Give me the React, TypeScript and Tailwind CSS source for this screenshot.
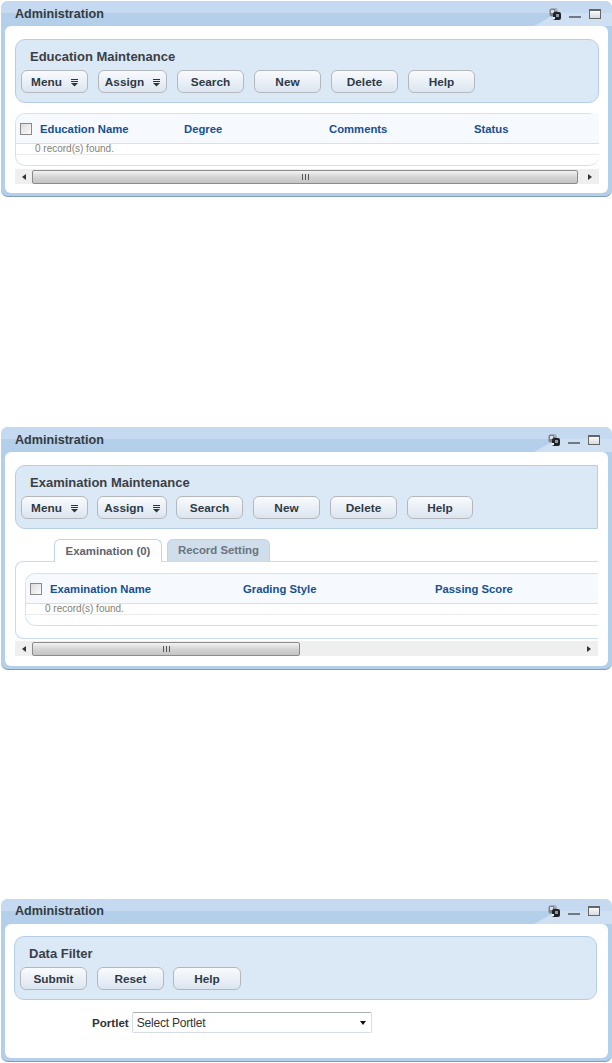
import React from "react";

const PortletIcons = () => {
  return (
    <div className="relative z-10 flex items-center gap-[8px]">
      <svg width="12" height="12" viewBox="0 0 12 12">
        <rect x="0.5" y="0.5" width="8" height="8" rx="2" fill="#7c8288" />
        <rect x="2" y="2" width="3" height="3" fill="#d9e0e6" />
        <rect x="6" y="0" width="2" height="3" fill="#a9b2ba" />
        <rect x="4" y="4" width="8" height="8" rx="2" fill="#202428" />
        <rect x="7" y="6" width="3" height="3" fill="#8d99a6" />
        <rect x="4" y="9" width="2" height="2" fill="#eef3f8" />
      </svg>
      <div className="mt-[7px] h-[2px] w-[12px] bg-[#6f7a86]" />
      <div className="h-[10px] w-[12px] border border-[#666] border-t-2 bg-gradient-to-b from-[#fafafa] to-[#d5dce2]" />
    </div>
  );
};

const Btn = ({ label, w, arrow }: { label: string; w: string; arrow?: boolean }) => {
  return (
    <button
      className={`flex h-[23px] items-center justify-center gap-[9px] rounded-[6px] border border-[#b4b8bc] bg-gradient-to-b from-[#f9fbfd] to-[#dbe5f0] pt-[2px] text-[11.8px] font-bold text-[#2e3a46] ${w}`}
    >
      {label}
      {arrow && (
        <svg width="7" height="8" viewBox="0 0 7 8">
          <path d="M0 0.5H7M0 2.5H7" stroke="#333" strokeWidth="1" />
          <path d="M0 4H7L3.5 7.5Z" fill="#333" />
        </svg>
      )}
    </button>
  );
};

const Header = ({ title, children, wide }: { title: string; children: React.ReactNode; wide?: boolean }) => {
  return (
    <div
      className={`h-[64px] border border-[#b5cee6] bg-[#dbe8f6] pl-[5px] pt-[9px] ${
        wide ? "rounded-l-[10px]" : "rounded-[10px]"
      }`}
    >
      <div className="ml-[9px] text-[13px] leading-[15px] font-bold text-[#3a3f46]">{title}</div>
      <div className="mt-[6px] flex gap-[10px]">{children}</div>
    </div>
  );
};

const Checkbox = () => {
  return <div className="h-[12px] w-[12px] border border-[#8a8a8a] bg-gradient-to-br from-[#dcdcdc] to-[#fbfbfb]" />;
};

const Scrollbar = ({ thumb }: { thumb: string }) => {
  return (
    <div className="flex h-[15px] items-center bg-[#efefef]">
      <div className="flex w-[17px] shrink-0 justify-center">
        <div className="h-0 w-0 border-y-[3px] border-r-[4px] border-y-transparent border-r-[#333]" />
      </div>
      <div className="flex-1">
        <div
          className={`flex h-[14px] items-center justify-center rounded-[2px] border border-[#8b8b8b] bg-gradient-to-b from-[#f3f3f3] via-[#d4d4d4] to-[#c4c4c4] ${thumb}`}
        >
          <div className="h-[6px] w-[7px] border-x border-[#555] bg-[linear-gradient(90deg,transparent_2px,#555_2px,#555_3px,transparent_3px)]" />
        </div>
      </div>
      <div className="flex w-[18px] shrink-0 justify-center">
        <div className="h-0 w-0 border-y-[3px] border-l-[4px] border-y-transparent border-l-[#333]" />
      </div>
    </div>
  );
};

const Table = ({
  cols,
  first,
}: {
  cols: { label: string; w: string }[];
  first?: boolean;
}) => {
  return (
    <div
      className={`h-[53px] rounded-l-[10px] border border-[#d3e2f2] border-r-0 ${first ? "rounded-r-[10px] border-r" : ""}`}
    >
      <div className="flex h-[30px] items-center rounded-tl-[10px] border-b border-[#d3e2f2] bg-[#f6faff] pl-[4px] pt-[1px]">
        <div className="mr-[8px]">
          <Checkbox />
        </div>
        {cols.map((c) => (
          <div key={c.label} className={`text-[11.3px] font-bold text-[#17508f] ${c.w}`}>
            {c.label}
          </div>
        ))}
      </div>
      <div className="h-[11px] border-b border-[#ececec] pl-[19px] text-[10px] leading-[10px] text-[#857f74]">
        0 record(s) found.
      </div>
    </div>
  );
};

const Portlet = ({
  children,
  h,
  titleClass,
}: {
  children: React.ReactNode;
  h: string;
  titleClass: string;
}) => {
  return (
    <div className={`relative ml-[1px] flex flex-col overflow-hidden rounded-[7px] border-b border-[#7f9cb8] bg-[#b3cfe9] ${h}`}>
      <div
        className={`relative flex h-[25px] shrink-0 items-center justify-between bg-[linear-gradient(#c5daf0_0,#c5daf0_12px,#b3cfe9_12px)] pl-[14px] ${titleClass}`}
      >
        <svg className="absolute right-0 top-0" width="78" height="25" viewBox="0 0 78 25">
          <path d="M0 25 L23 12 L78 12 L78 25 Z" fill="#cfe0f2" />
        </svg>
        <span className="relative mt-[1px] text-[12.6px] font-bold text-[#333b44]">Administration</span>
        <PortletIcons />
      </div>
      <div className="mx-[4px] mb-[3px] flex-1 rounded-[6px] bg-white px-[10px] pt-[13px]">{children}</div>
    </div>
  );
};

export default function App() {
  return (
    <div className="h-[1063px] w-[612px] bg-white font-['Liberation_Sans',Arial,sans-serif]">
      <div className="h-[1px]" />
      <Portlet h="h-[196px]" titleClass="pr-[11px]">
        <div className="mr-[-1px]">
          <Header title="Education Maintenance">
            <Btn label="Menu" w="w-[67px]" arrow />
            <Btn label="Assign" w="w-[69px]" arrow />
            <Btn label="Search" w="w-[67px]" />
            <Btn label="New" w="w-[67px]" />
            <Btn label="Delete" w="w-[67px]" />
            <Btn label="Help" w="w-[67px]" />
          </Header>
          <div className="mt-[10px]">
            <Table
              first
              cols={[
                { label: "Education Name", w: "w-[144px]" },
                { label: "Degree", w: "w-[145px]" },
                { label: "Comments", w: "w-[145px]" },
                { label: "Status", w: "w-[60px]" },
              ]}
            />
          </div>
          <div className="mt-[3px]">
            <Scrollbar thumb="w-[546px]" />
          </div>
        </div>
      </Portlet>

      <div className="h-[230px]" />

      <Portlet h="h-[243px]" titleClass="pr-[12px]">
        <div>
          <Header title="Examination Maintenance" wide>
            <Btn label="Menu" w="w-[67px]" arrow />
            <Btn label="Assign" w="w-[70px] ml-[-1px]" arrow />
            <Btn label="Search" w="w-[67px] ml-[-1px]" />
            <Btn label="New" w="w-[67px]" />
            <Btn label="Delete" w="w-[67px]" />
            <Btn label="Help" w="w-[66px]" />
          </Header>
          <div className="ml-[39px] mt-[10px] flex h-[23px] gap-[5px]">
            <div className="z-10 flex h-[23px] w-[108px] items-center justify-center rounded-t-[6px] border border-b-0 border-[#bcd5ec] bg-white pt-[1px] text-[11.4px] font-bold text-[#5c636b]">
              Examination (0)
            </div>
            <div className="flex h-[22px] w-[103px] items-center justify-center rounded-t-[6px] border border-b-0 border-[#bcd5ec] bg-[#d0ddeb] pt-[1px] text-[11.4px] font-bold text-[#6a7480]">
              Record Setting
            </div>
          </div>
          <div className="mt-[-1px] h-[78px] rounded-l-[8px] border border-r-0 border-[#c6dcf0] pl-[9px] pt-[11px]">
            <Table
              cols={[
                { label: "Examination Name", w: "w-[193px]" },
                { label: "Grading Style", w: "w-[192px]" },
                { label: "Passing Score", w: "w-[120px]" },
              ]}
            />
          </div>
          <div className="mt-[2px]">
            <Scrollbar thumb="w-[268px]" />
          </div>
        </div>
      </Portlet>

      <div className="h-[229px]" />

      <Portlet h="h-[163px]" titleClass="pr-[12px] pb-[2px]">
        <div className="ml-[-1px] mr-[1px] mt-[-1px]">
          <Header title="Data Filter">
            <Btn label="Submit" w="w-[67px]" />
            <Btn label="Reset" w="w-[67px]" />
            <Btn label="Help" w="w-[68px] ml-[-1px]" />
          </Header>
          <div className="mt-[12px] flex items-center">
            <span className="ml-[78px] mr-[3px] text-[11.6px] font-bold text-[#2e3338]">Portlet</span>
            <div className="flex h-[21px] w-[240px] items-center justify-between rounded-[2px] border border-[#d5dde5] border-t-[#a9b0b8] pl-[4px] pr-[3px] text-[12px] tracking-[-0.2px] text-[#333]">
              Select Portlet
              <div className="mr-[2px] h-0 w-0 border-x-[3.5px] border-t-[4px] border-x-transparent border-t-[#111]" />
            </div>
          </div>
        </div>
      </Portlet>
    </div>
  );
}
